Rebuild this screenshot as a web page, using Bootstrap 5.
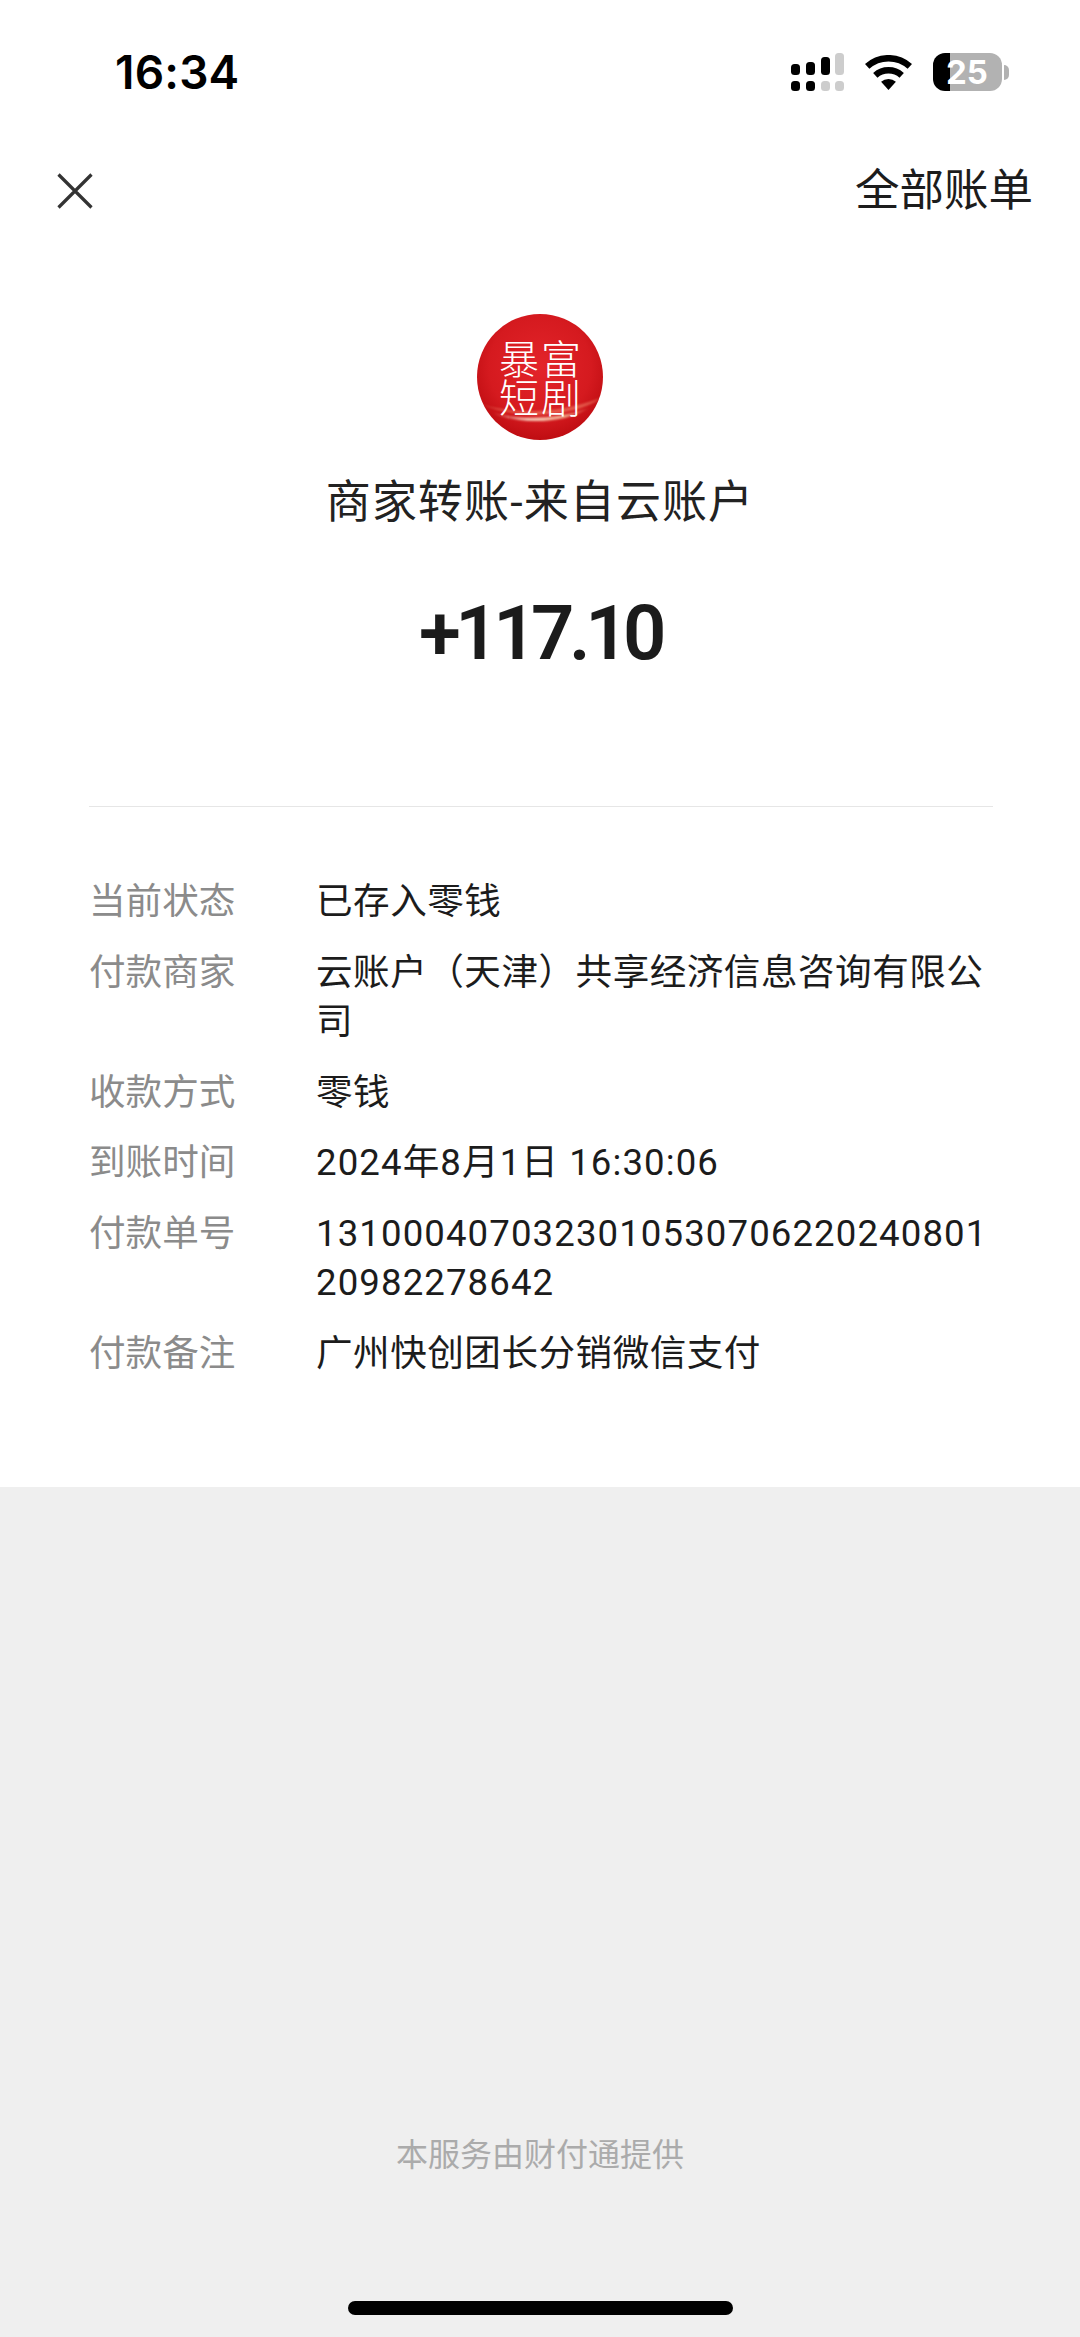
<!DOCTYPE html>
<html lang="zh-CN">
<head>
  <meta charset="UTF-8"/>
  <meta name="viewport" content="width=device-width, initial-scale=1.0"/>
  <title>账单详情</title>
  <link href="https://cdn.jsdelivr.net/npm/bootstrap@5.3.2/dist/css/bootstrap.min.css" rel="stylesheet"/>
  <style>
    body { background: #efefef; font-family: Roboto, "Noto Sans CJK SC", sans-serif; }
    .bill-page { height: 2337px; }
    .bill-panel { height: 1487px; }
    .status-row { height: 144px; padding: 0 71px 0 115px; }
    .status-time { font-family: Inter, sans-serif; font-weight: 600; font-size: 46px; letter-spacing: .2px; line-height: 1; color: #000; }
    .status-icons { gap: 21px; }
    .batt { width: 69px; height: 38px; border-radius: 12px; overflow: hidden; background: linear-gradient(90deg, #000 17px, #b2b2b2 17px); color: #fff; font: 700 33px/38px Inter, sans-serif; padding-left: 13px; }
    .batt-nub { width: 5px; height: 15px; margin-left: 2px; background: #b2b2b2; border-radius: 0 8px 8px 0; }
    .nav-row { height: 92px; padding: 2px 47px 0 57px; }
    .bills-link { font-size: 44.5px; color: #1c1c1c; line-height: 60px; }
    .merchant-logo { display: block; width: 126px; height: 126px; margin: 78px auto 0; }
    .logo-text { font-family: "Noto Sans CJK SC", sans-serif; font-size: 40px; font-weight: 300; fill: #fff; }
    .bill-title { margin-top: 33px; font-size: 45px; line-height: 60px; color: #222; letter-spacing: 1.1px; }
    .bill-amount { margin-top: 50px; font-size: 76px; line-height: 100px; font-weight: 600; color: #1b1b1b; letter-spacing: -5.5px; }
    .bill-rule { margin: 123px 87px 0 89px; height: 1px; background: #e6e6e6; }
    .bill-details { margin: 70px 87px 0 89px; }
    .detail-row { display: flex; margin-bottom: 21.8px; font-size: 36.6px; line-height: 49px; }
    .detail-label { width: 227px; flex: none; color: #8b8b8b; }
    .detail-value { flex: 1; color: #1c1c1c; word-break: break-all; letter-spacing: .5px; }
    .digits-wide { letter-spacing: 1.1px; }
    .bill-foot { font-size: 32px; line-height: 44px; color: #ababab; margin-bottom: 124px; }
    .home-bar { width: 385px; height: 14px; border-radius: 7px; background: #000; margin: 0 auto 22px; }
  </style>
</head>
<body>
  <div class="bill-page d-flex flex-column">
    <div class="bill-panel bg-white">
      <div class="status-row d-flex justify-content-between align-items-center">
        <span class="status-time">16:34</span>
        <div class="status-icons d-flex align-items-center">
          <svg width="53" height="38" viewBox="0 0 53 38">
            <rect x="0" y="11" width="9" height="11" rx="3.5" fill="#000"/>
            <rect x="15" y="9" width="9" height="13" rx="3.5" fill="#000"/>
            <rect x="30" y="4" width="9" height="18" rx="3.5" fill="#000"/>
            <rect x="44" y="0" width="9" height="22" rx="3.5" fill="#cdcdcd"/>
            <rect x="0" y="28" width="9" height="10" rx="3.5" fill="#000"/>
            <rect x="15" y="28" width="9" height="10" rx="3.5" fill="#000"/>
            <rect x="30" y="28" width="9" height="10" rx="3.5" fill="#cdcdcd"/>
            <rect x="44" y="28" width="9" height="10" rx="3.5" fill="#cdcdcd"/>
          </svg>
          <svg width="47" height="35" viewBox="0 0 47 35">
            <path d="M2.2 11.4A31.8 31.8 0 0 1 44.8 11.4" fill="none" stroke="#000" stroke-width="6.5"/>
            <path d="M10.3 20.3A19.8 19.8 0 0 1 36.7 20.3" fill="none" stroke="#000" stroke-width="6.5"/>
            <path d="M23.5 35L16.1 26.8A11 11 0 0 1 30.9 26.8Z" fill="#000"/>
          </svg>
          <div class="d-flex align-items-center">
            <div class="batt">25</div>
            <div class="batt-nub"></div>
          </div>
        </div>
      </div>
      <div class="nav-row d-flex justify-content-between align-items-center">
        <svg width="36" height="36" viewBox="0 0 36 36">
          <path d="M1.5 1.5L34.5 34.5M34.5 1.5L1.5 34.5" stroke="#333" stroke-width="3.2" fill="none"/>
        </svg>
        <span class="bills-link">全部账单</span>
      </div>
      <svg class="merchant-logo" viewBox="0 0 126 126">
        <defs>
          <radialGradient id="logoRed" cx="50%" cy="42%" r="58%">
            <stop offset="0" stop-color="#e3242a"/>
            <stop offset=".7" stop-color="#d51a1f"/>
            <stop offset="1" stop-color="#bf0d12"/>
          </radialGradient>
          <linearGradient id="logoBand" x1="0" y1="0" x2="1" y2="0">
            <stop offset="0" stop-color="#f9d9c8" stop-opacity=".2"/>
            <stop offset=".35" stop-color="#fbe6d2" stop-opacity=".9"/>
            <stop offset=".75" stop-color="#f8d2a8" stop-opacity=".8"/>
            <stop offset="1" stop-color="#f4b38e" stop-opacity=".2"/>
          </linearGradient>
          <clipPath id="logoClip"><circle cx="63" cy="63" r="63"/></clipPath>
          <filter id="logoBlur"><feGaussianBlur stdDeviation="1.2"/></filter>
        </defs>
        <circle cx="63" cy="63" r="63" fill="url(#logoRed)"/>
        <g clip-path="url(#logoClip)">
          <path d="M4 90C30 99 76 102 124 84C96 104 40 106 4 90Z" fill="#ee7d63" opacity=".65" filter="url(#logoBlur)"/>
          <path d="M16 99C42 106 80 106 112 94C86 110 44 111 16 99Z" fill="url(#logoBand)" filter="url(#logoBlur)"/>
        </g>
        <text class="logo-text" x="22" y="60">暴</text>
        <text class="logo-text" x="64" y="60">富</text>
        <text class="logo-text" x="22" y="99">短</text>
        <text class="logo-text" x="64" y="99">剧</text>
      </svg>
      <div class="bill-title text-center">商家转账-来自云账户</div>
      <div class="bill-amount text-center">+117.10</div>
      <div class="bill-rule"></div>
      <div class="bill-details">
        <div class="detail-row"><div class="detail-label">当前状态</div><div class="detail-value">已存入零钱</div></div>
        <div class="detail-row"><div class="detail-label">付款商家</div><div class="detail-value">云账户（天津）共享经济信息咨询有限公司</div></div>
        <div class="detail-row"><div class="detail-label">收款方式</div><div class="detail-value">零钱</div></div>
        <div class="detail-row"><div class="detail-label">到账时间</div><div class="detail-value digits-wide">2024年8月1日 16:30:06</div></div>
        <div class="detail-row"><div class="detail-label">付款单号</div><div class="detail-value digits-wide">131000407032301053070622024080120982278642</div></div>
        <div class="detail-row"><div class="detail-label">付款备注</div><div class="detail-value">广州快创团长分销微信支付</div></div>
      </div>
    </div>
    <div class="flex-grow-1 d-flex flex-column justify-content-end">
      <div class="bill-foot text-center">本服务由财付通提供</div>
      <div class="home-bar"></div>
    </div>
  </div>
  <script src="https://cdn.jsdelivr.net/npm/bootstrap@5.3.2/dist/js/bootstrap.bundle.min.js"></script>
</body>
</html>
